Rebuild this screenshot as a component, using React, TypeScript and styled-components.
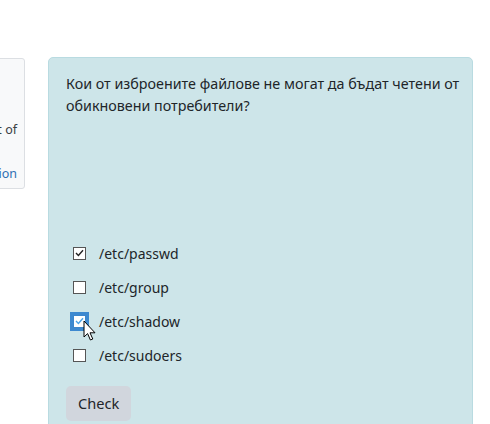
import React from "react";
import styled, { createGlobalStyle } from "styled-components";

const GlobalStyle = createGlobalStyle`
  html, body {
    margin: 0;
    padding: 0;
    background: #ffffff;
    overflow: hidden;
  }
  body {
    font-family: "Noto Sans", "Open Sans", sans-serif;
    color: #212529;
  }
`;

const Page = styled.div`
  width: 490px;
  height: 424px;
  padding-top: 57px;
  box-sizing: border-box;
  overflow: hidden;
`;

const Row = styled.div`
  display: flex;
  align-items: flex-start;
`;

const SideCard = styled.div`
  flex: none;
  width: 200px;
  height: 131px;
  margin-left: -175px;
  margin-top: 1px;
  box-sizing: border-box;
  padding: 60px 7px 0 12px;
  background: #f8f9fa;
  border: 1px solid #dcdfe3;
  border-radius: 3px;
  font-size: 12.5px;
  line-height: 22px;
  text-align: right;
`;

const SideText = styled.div`
  color: #3a3f44;
`;

const SideLink = styled.div`
  margin-top: 22px;
  color: #2f6fb3;
`;

const Panel = styled.div`
  flex: none;
  width: 425px;
  min-height: 380px;
  margin-left: 23px;
  box-sizing: border-box;
  padding: 15px 10px 15px 17px;
  background: #cde5e9;
  border: 1px solid #b9dbe1;
  border-radius: 5px;
`;

const Question = styled.p`
  margin: 0;
  min-height: 163px;
  font-size: 14.3px;
  line-height: 22px;
`;

const Options = styled.div`
  display: flex;
  flex-direction: column;
  padding-left: 7px;
`;

const Option = styled.label`
  position: relative;
  display: flex;
  align-items: center;
  gap: 13px;
  height: 34px;
  font-size: 14px;
`;

const Box = styled.span<{ $focused?: boolean }>`
  position: relative;
  flex: none;
  width: 13px;
  height: 13px;
  box-sizing: border-box;
  background: #ffffff;
  border: 1px solid ${({ $focused }) => ($focused ? "#3c86cc" : "#555555")};
  outline: ${({ $focused }) => ($focused ? "3px solid #3d89d0" : "none")};
  display: flex;
  align-items: center;
  justify-content: center;
`;

const Cursor = styled.svg`
  position: absolute;
  left: 10px;
  top: 16px;
  pointer-events: none;
`;

const CheckButton = styled.button`
  margin-top: 14px;
  padding: 7px 12px;
  font-family: inherit;
  font-size: 14.6px;
  line-height: 21px;
  color: #212529;
  background: #d1d6dd;
  border: none;
  border-radius: 5px;
`;

type Choice = {
  label: string;
  checked: boolean;
  focused?: boolean;
};

const CHOICES: Choice[] = [
  { label: "/etc/passwd", checked: true },
  { label: "/etc/group", checked: false },
  { label: "/etc/shadow", checked: true, focused: true },
  { label: "/etc/sudoers", checked: false },
];

const Tick = ({ color }: { color: string }) => (
  <svg width="9" height="8" viewBox="0 0 9 8">
    <path d="M1 4 L3.4 6.4 L8 1.2" fill="none" stroke={color} strokeWidth="1.4" />
  </svg>
);

export default function App() {
  return (
    <Page>
      <GlobalStyle />
      <Row>
        <SideCard>
          <SideText>part of</SideText>
          <SideLink>description</SideLink>
        </SideCard>
        <Panel>
          <Question>
            Кои от изброените файлове не могат да бъдат четени от обикновени
            потребители?
          </Question>
          <Options>
            {CHOICES.map((choice) => (
              <Option key={choice.label}>
                <Box $focused={choice.focused}>
                  {choice.checked && (
                    <Tick color={choice.focused ? "#4aa3e8" : "#222222"} />
                  )}
                </Box>
                {choice.label}
                {choice.focused && (
                  <Cursor width="14" height="22" viewBox="0 0 14 22">
                    <path
                      d="M1 1 L1 17 L4.6 13.6 L7.4 20 L9.8 19 L7 12.8 L12 12.8 Z"
                      fill="#ffffff"
                      stroke="#000000"
                      strokeWidth="1"
                      strokeLinejoin="round"
                    />
                  </Cursor>
                )}
              </Option>
            ))}
          </Options>
          <CheckButton>Check</CheckButton>
        </Panel>
      </Row>
    </Page>
  );
}
